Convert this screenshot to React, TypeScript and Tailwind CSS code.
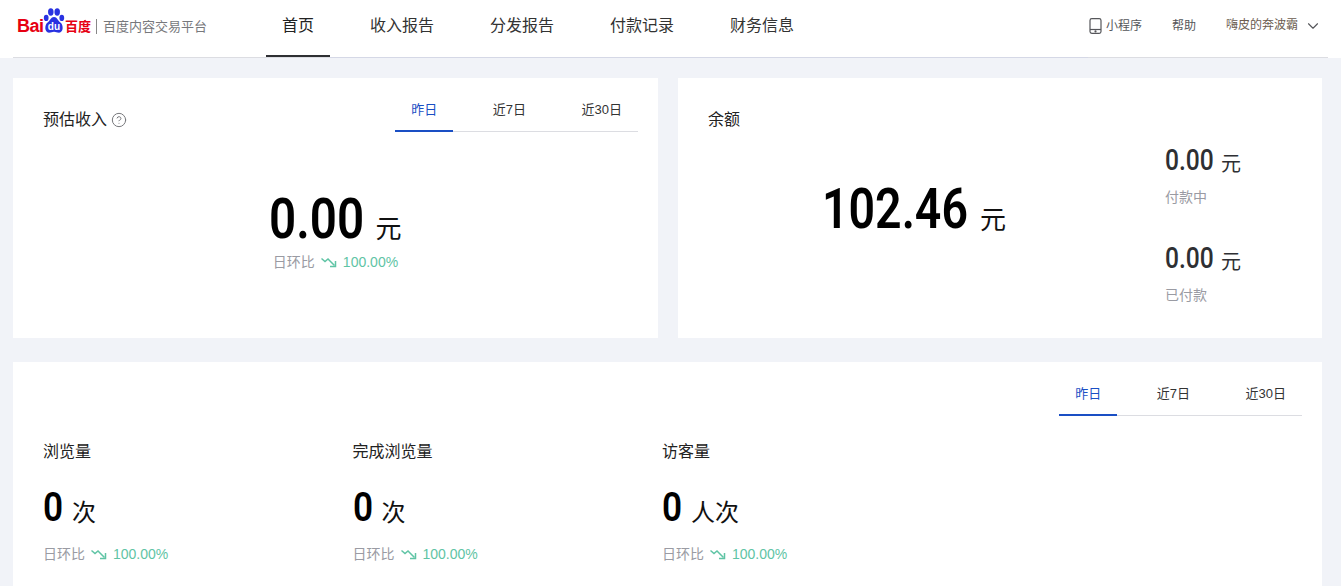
import { ChevronDown, CircleHelp } from "lucide-react";

const cjk = "font-['Liberation_Sans','Noto_Sans_CJK_SC',sans-serif]";
const num = "font-['Roboto','Noto_Sans_CJK_SC',sans-serif]";

const navItems = ["首页", "收入报告", "分发报告", "付款记录", "财务信息"];

function BaiduLogo() {
  return (
    <div className="flex items-center">
      <span className="mt-[8px] w-[26px] text-[18px] leading-none font-bold tracking-[-0.5px] text-[#e60012]">Bai</span>
      <svg width="22" height="27" viewBox="1.5 1 24 27.5" className="-mt-[4px]">
        <g fill="#2932e1">
          <ellipse cx="5" cy="12" rx="2.6" ry="3.4" />
          <ellipse cx="10" cy="5.5" rx="3" ry="4" />
          <ellipse cx="17" cy="5.5" rx="3" ry="4" />
          <ellipse cx="22" cy="12" rx="2.6" ry="3.4" />
          <path d="M13.5 11 C10 11 9.500 15 6.500 17 C3 19.500 3 28 8 28 C10.500 28 11.500 27 13.500 27 C15.500 27 16.500 28 19 28 C24 28 24 19.500 20.500 17 C17.500 15 17 11 13.500 11 Z" />
        </g>
        <text x="13.500" y="25" textAnchor="middle" fontSize="11" fontWeight="700" fill="#ffffff" fontFamily="Liberation Sans">du</text>
      </svg>
      <span className="mt-[8px] text-[13px] leading-none font-bold text-[#e60012]">百度</span>
      <span className="ml-[5px] mr-[6px] mt-[8px] h-[15px] w-px bg-[#888888]" />
      <span className="mt-[8px] text-[13px] leading-none text-[#77787c]">百度内容交易平台</span>
    </div>
  );
}

function PhoneIcon() {
  return (
    <svg width="13" height="16" viewBox="0 0 13 16" fill="none" stroke="#55565a" strokeWidth="1.200">
      <rect x="1" y="0.700" width="11" height="14.600" rx="1.800" />
      <path d="M1 11.500 H12" />
      <circle cx="6.500" cy="13.400" r="0.500" fill="#55565a" />
    </svg>
  );
}

function Header() {
  return (
    <header className="flex h-[58px] bg-white">
      <div className="w-[266px] pl-[17px] pt-[9px]">
        <BaiduLogo />
      </div>
      <nav className="flex">
        {navItems.map((item, i) => (
          <div
            key={item}
            className={
              i === 0
                ? "mr-[12px] h-[57px] w-[64px] border-b-2 border-[#2e2f33] pt-[14px] text-center text-[16px] leading-[24px] text-[#222222]"
                : "h-[57px] w-[120px] pt-[14px] text-center text-[16px] leading-[24px] text-[#333333]"
            }
          >
            {item}
          </div>
        ))}
      </nav>
      <div className="ml-auto flex h-[52px] items-center pr-[19px] text-[12px] text-[#55565a]">
        <PhoneIcon />
        <span className="ml-[4px]">小程序</span>
        <span className="ml-[30px]">帮助</span>
        <span className="mb-[3px] ml-[30px] text-[#6b5c50]">嗨皮的奔波霸</span>
        <ChevronDown size={18} strokeWidth={1.500} className="ml-[6px] text-[#55565a]" />
      </div>
    </header>
  );
}

function Tabs() {
  return (
    <div className="flex gap-[23.5px] border-b border-[#dcdde2] text-[13px] leading-[20px] text-[#333333]">
      <span className="-mb-px border-b-2 border-[#1a4fc4] px-4 pb-[10px] pt-[3px] text-[#1a4fc4]">昨日</span>
      <span className="px-4 pb-[10px] pt-[3px]">近7日</span>
      <span className="px-4 pb-[10px] pt-[3px]">近30日</span>
    </div>
  );
}

function TrendIcon() {
  return (
    <svg width="16" height="12" viewBox="0 0 16 12" fill="none" stroke="#5fc4a5" strokeWidth="1.500">
      <path d="M0.500 2.500 L4 5.500 L7 3 L13.500 9.500" />
      <path d="M14.500 5 V10.500 H9" />
    </svg>
  );
}

function Ratio() {
  return (
    <div className="flex items-center text-[14px] leading-[20px]">
      <span className="text-[#9a9ba3]">日环比</span>
      <span className="ml-[6px] mr-[6px]">
        <TrendIcon />
      </span>
      <span className="text-[#5fc4a5]">100.00%</span>
    </div>
  );
}

function SideAmount({ label }: { label: string }) {
  return (
    <div>
      <div className="flex h-[38px] items-center">
        <span className={`${num} inline-block w-[49px] origin-left scale-x-[.82] text-[30px] leading-none font-medium text-[#2e2f33]`}>0.00</span>
        <span className="ml-[7px] mt-[7px] text-[20px] leading-none text-[#2e2f33]">元</span>
      </div>
      <div className="mt-[8px] text-[14px] leading-[20px] text-[#9a9ba3]">{label}</div>
    </div>
  );
}

function Metric({ title, unit }: { title: string; unit: string }) {
  return (
    <div className="w-[309.5px]">
      <div className="text-[16px] leading-[24px] text-[#222222]">{title}</div>
      <div className="mt-[20px] flex h-[48px] items-center">
        <span className={`${num} inline-block w-[20px] origin-left scale-x-[.88] text-[40px] leading-none font-semibold text-black`}>0</span>
        <span className="ml-[9px] mt-[10px] text-[24px] leading-none text-[#111111]">{unit}</span>
      </div>
      <div className="mt-[12px]">
        <Ratio />
      </div>
    </div>
  );
}

export default function App() {
  return (
    <div className={`${cjk} h-[586px] w-[1341px] overflow-hidden bg-[#f1f3f8]`}>
      <Header />
      <div className="mx-[13px] -mt-px flex h-px">
        <div className="w-[317px] bg-[#dcdde2]" />
        <div className="w-[758px] bg-[#d5d8e6]" />
        <div className="flex-1 bg-[#dcdde2]" />
      </div>

      <main className="px-[13px] pr-[19px] pt-[20px]">
        <div className="flex gap-[20px]">
          <section className="h-[260px] w-[645px] bg-white pl-[30px] pr-[20px] pt-[19px]">
            <div className="flex items-start justify-between">
              <div className="mt-[11px] flex items-center text-[16px] leading-[24px] text-[#222222]">
                预估收入
                <CircleHelp size={16} strokeWidth={1.500} className="ml-[4px] text-[#77787c]" />
              </div>
              <Tabs />
            </div>
            <div className="mt-[51px] flex flex-col items-center pr-[10px]">
              <div className="flex items-end">
                <span className={`${num} inline-block w-[94px] origin-left scale-x-[.85] text-[56px] leading-[72px] font-semibold text-black`}>0.00</span>
                <span className="mb-[13px] ml-[12px] text-[26px] leading-none text-[#111111]">元</span>
              </div>
              <div className="-mt-[3px]">
                <Ratio />
              </div>
            </div>
          </section>

          <section className="flex h-[260px] flex-1 bg-white pl-[30px] pt-[30px]">
            <div className="w-[114px] text-[16px] leading-[24px] text-[#222222]">余额</div>
            <div className="flex h-[80px] w-[343px] items-start pt-[69px]">
              <span className={`${num} inline-block w-[146px] origin-left scale-x-[.83] text-[56px] leading-[64px] font-semibold text-black`}>102.46</span>
              <span className="ml-[12px] mt-[30px] text-[26px] leading-none text-[#111111]">元</span>
            </div>
            <div className="mt-[33px] flex flex-col gap-[32px]">
              <SideAmount label="付款中" />
              <SideAmount label="已付款" />
            </div>
          </section>
        </div>

        <section className="mt-[24px] h-[260px] bg-white pl-[30px] pr-[20px] pt-[19px]">
          <div className="flex justify-end">
            <Tabs />
          </div>
          <div className="mt-[24px] flex">
            <Metric title="浏览量" unit="次" />
            <Metric title="完成浏览量" unit="次" />
            <Metric title="访客量" unit="人次" />
          </div>
        </section>
      </main>
    </div>
  );
}
